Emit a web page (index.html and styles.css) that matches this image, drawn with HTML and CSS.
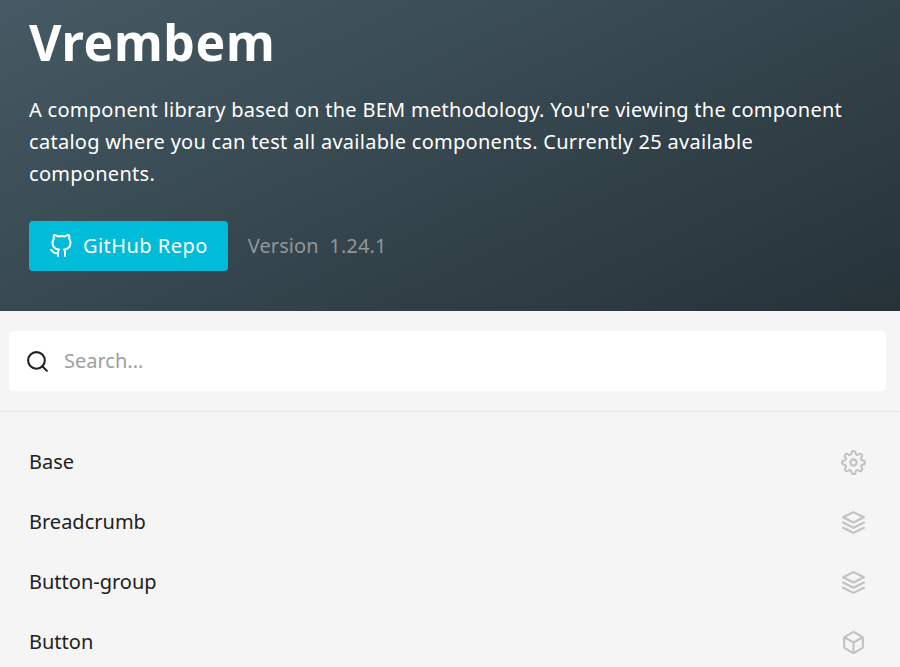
FILE: index.html
```html
<!DOCTYPE html>
<html lang="en">
<head>
    <meta charset="UTF-8">
    <title>Vrembem</title>
    <link rel="stylesheet" href="styles.css">
</head>
<body>
    <header class="hero">
        <h1 class="hero-title">Vrembem</h1>
        <p class="hero-text">A component library based on the BEM methodology. You're viewing the component catalog where you can test all available components. Currently 25 available components.</p>
        <div class="hero-actions">
            <a href="#" class="button">
                <svg class="icon" viewBox="0 0 24 24"><path d="M9 19c-5 1.500-5-2.500-7-3m14 6v-3.870a3.370 3.370 0 0 0-.94-2.610c3.140-.35 6.440-1.540 6.440-7A5.440 5.440 0 0 0 20 4.770 5.070 5.070 0 0 0 19.910 1S18.730.65 16 2.480a13.380 13.380 0 0 0-7 0C6.270.65 5.090 1 5.090 1A5.070 5.070 0 0 0 5 4.770a5.440 5.440 0 0 0-1.500 3.780c0 5.420 3.300 6.610 6.440 7A3.370 3.370 0 0 0 9 18.130V22"/></svg>
                <span class="button-label">GitHub Repo</span>
            </a>
            <span class="version">Version&nbsp; 1.24.1</span>
        </div>
    </header>

    <div class="search-wrap">
        <div class="search">
            <svg class="icon search-icon" viewBox="0 0 24 24"><circle cx="11" cy="11" r="8"/><line x1="21" y1="21" x2="16.650" y2="16.650"/></svg>
            <span class="search-placeholder">Search...</span>
        </div>
    </div>

    <ul class="menu">
        <li class="menu-item">
            <span class="menu-label">Base</span>
            <svg class="icon menu-icon" viewBox="0 0 24 24"><circle cx="12" cy="12" r="3"/><path d="M19.400 15a1.650 1.650 0 0 0 .33 1.820l.06.06a2 2 0 0 1 0 2.830 2 2 0 0 1-2.830 0l-.06-.06a1.650 1.650 0 0 0-1.820-.33 1.650 1.650 0 0 0-1 1.510V21a2 2 0 0 1-2 2 2 2 0 0 1-2-2v-.09A1.650 1.650 0 0 0 9 19.400a1.650 1.650 0 0 0-1.820.33l-.06.06a2 2 0 0 1-2.830 0 2 2 0 0 1 0-2.830l.06-.06a1.650 1.650 0 0 0 .33-1.820 1.650 1.650 0 0 0-1.510-1H3a2 2 0 0 1-2-2 2 2 0 0 1 2-2h.09A1.650 1.650 0 0 0 4.600 9a1.650 1.650 0 0 0-.33-1.820l-.06-.06a2 2 0 0 1 0-2.830 2 2 0 0 1 2.830 0l.06.06a1.650 1.650 0 0 0 1.820.33H9a1.650 1.650 0 0 0 1-1.510V3a2 2 0 0 1 2-2 2 2 0 0 1 2 2v.09a1.650 1.650 0 0 0 1 1.510 1.650 1.650 0 0 0 1.820-.33l.06-.06a2 2 0 0 1 2.830 0 2 2 0 0 1 0 2.830l-.06.06a1.650 1.650 0 0 0-.33 1.820V9a1.650 1.650 0 0 0 1.510 1H21a2 2 0 0 1 2 2 2 2 0 0 1-2 2h-.09a1.650 1.650 0 0 0-1.510 1z"/></svg>
        </li>
        <li class="menu-item">
            <span class="menu-label">Breadcrumb</span>
            <svg class="icon menu-icon" viewBox="0 0 24 24"><polygon points="12 2 2 7 12 12 22 7 12 2"/><polyline points="2 17 12 22 22 17"/><polyline points="2 12 12 17 22 12"/></svg>
        </li>
        <li class="menu-item">
            <span class="menu-label">Button-group</span>
            <svg class="icon menu-icon" viewBox="0 0 24 24"><polygon points="12 2 2 7 12 12 22 7 12 2"/><polyline points="2 17 12 22 22 17"/><polyline points="2 12 12 17 22 12"/></svg>
        </li>
        <li class="menu-item">
            <span class="menu-label">Button</span>
            <svg class="icon menu-icon" viewBox="0 0 24 24"><path d="M21 16V8a2 2 0 0 0-1-1.730l-7-4a2 2 0 0 0-2 0l-7 4A2 2 0 0 0 3 8v8a2 2 0 0 0 1 1.730l7 4a2 2 0 0 0 2 0l7-4A2 2 0 0 0 21 16z"/><polyline points="3.270 6.960 12 12.010 20.730 6.960"/><line x1="12" y1="22.080" x2="12" y2="12"/></svg>
        </li>
    </ul>
</body>
</html>
```

FILE: styles.css
```css
html, body {
    height: 667px;
    overflow: hidden;
}

body {
    margin: 0;
    font-family: "Noto Sans", sans-serif;
    font-size: 20px;
    color: #212121;
    background-color: #f5f5f5;
}

.icon {
    width: 24px;
    height: 24px;
    fill: none;
    stroke: currentColor;
    stroke-width: 2;
    stroke-linecap: round;
    stroke-linejoin: round;
    flex-shrink: 0;
}

.hero {
    height: 311px;
    box-sizing: border-box;
    padding: 10px 40px 0 29px;
    color: #fff;
    background: linear-gradient(155deg, #455a64 0%, #263238 100%);
}

.hero-title {
    margin: 0;
    font-size: 50px;
    line-height: 64px;
    font-weight: 700;
    letter-spacing: .6px;
}

.hero-text {
    margin: 20px 0 0;
    line-height: 32px;
    letter-spacing: .28px;
}

.hero-actions {
    display: flex;
    align-items: center;
    gap: 20px;
    margin-top: 31px;
}

.button {
    display: flex;
    align-items: center;
    gap: 10px;
    height: 50px;
    padding: 0 20px;
    border-radius: 4px;
    color: #fff;
    text-decoration: none;
    letter-spacing: .45px;
    background-color: #00bcd9;
}

.button-label {
    margin-top: -2px;
}

.version {
    margin-top: -2px;
    letter-spacing: .1px;
    color: #90979b;
}

.search-wrap {
    padding: 20px 14px 20px 9px;
    border-bottom: 1px solid #e8e8e8;
}

.search {
    display: flex;
    align-items: center;
    gap: 14px;
    height: 60px;
    padding: 0 16px;
    border-radius: 4px;
    background-color: #fff;
}

.search-icon {
    width: 25px;
    height: 25px;
}

.search-placeholder {
    color: #9e9e9e;
    margin-top: -2px;
}

.menu {
    list-style: none;
    margin: 0;
    padding: 20px 34px 0 29px;
}

.menu-item {
    display: flex;
    justify-content: space-between;
    align-items: center;
    height: 60px;
}

.menu-label {
    margin-top: -2px;
}

.menu-icon {
    width: 25px;
    height: 25px;
    color: #c2c2c2;
}
```
